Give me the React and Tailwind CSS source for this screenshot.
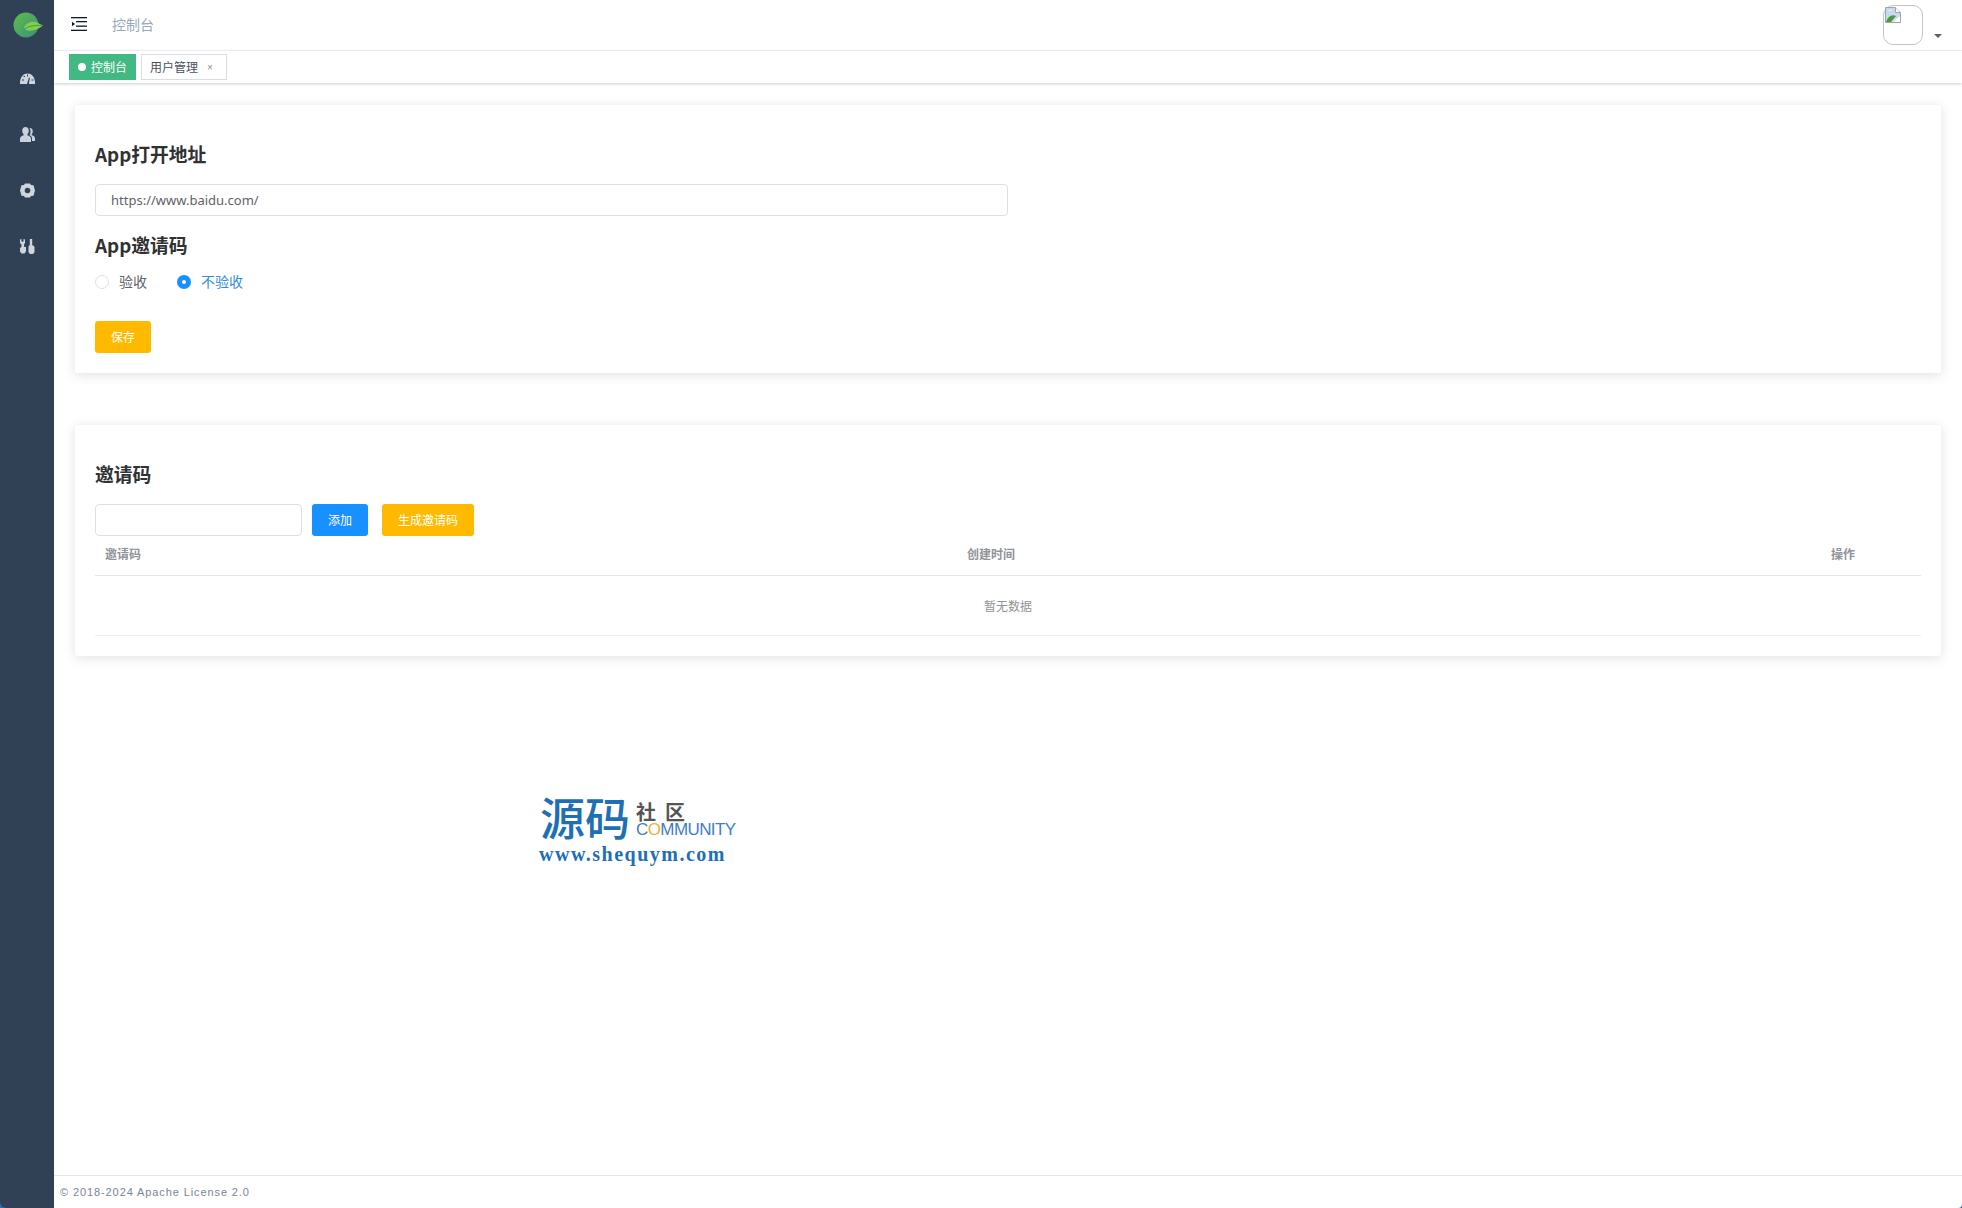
import React from "react";

const SANS = `font-["Noto_Sans_CJK_SC","Noto_Sans",sans-serif]`;

function Leaf() {
  return (
    <svg width="30" height="26" viewBox="0 0 30 26">
      <defs>
        <linearGradient id="ball" x1="0" y1="0" x2="1" y2="1">
          <stop offset="0" stopColor="#5cbf45" />
          <stop offset="1" stopColor="#3c8f80" />
        </linearGradient>
      </defs>
      <circle cx="13" cy="13" r="12.5" fill="url(#ball)" />
      <path d="M11 16c1-4 6-7 12-6l7 3.500c-4 3.500-10 6-15 5-2-.5-3-1-4-2.500z" fill="#84cc4b" />
      <path d="M9 19c5-5 12-6 21-5.500" stroke="#3f9a63" strokeWidth="1" fill="none" />
    </svg>
  );
}

function GaugeIcon() {
  return (
    <svg width="15" height="15" viewBox="0 0 15 15">
      <path d="M0 13c-.5-6 3-10.500 7.500-10.500S15.500 7 15 13z" fill="#cfd5dc" />
      <path d="M7 13l2-6.500 1 .3-1.200 6.200z" fill="#304156" />
      <rect x="7" y="3.500" width="1" height="2" fill="#304156" />
      <rect x="2" y="8.500" width="2" height="1" fill="#304156" />
      <rect x="11.500" y="8.500" width="2" height="1" fill="#304156" />
      <rect x="3.500" y="5" width="1.500" height="1" fill="#304156" />
    </svg>
  );
}

function UsersIcon() {
  return (
    <svg width="15" height="15" viewBox="0 0 15 15" fill="#c9d2dc">
      <path d="M5.500 0c2 0 3.300 1.500 3.300 3.700 0 1.500-.6 2.800-1.400 3.500v1c1.800.6 3.600 1.700 3.600 3.300V15H0v-3.500c0-1.600 1.800-2.700 3.600-3.300v-1c-.8-.7-1.400-2-1.400-3.500C2.200 1.500 3.500 0 5.500 0z" />
      <path d="M10 1c1.700 0 2.800 1.300 2.800 3.200 0 1.300-.5 2.400-1.200 3v.8c1.500.5 3.400 1.500 3.400 3V14h-3v-2.500c0-1.500-1-2.600-2.500-3.400.8-1 1.200-2.600 1-4.300-.1-1-.5-1.900-1-2.500.1 0 .3-.3.500-.3z" />
    </svg>
  );
}

function GearIcon() {
  return (
    <svg width="15" height="15" viewBox="0 0 15 15" fill="#cfd5dc">
      <path
        fillRule="evenodd"
        d="M5 .5h5l1 1.500 2.500.3L15 7.500l-1.500 5.200-2.500.3-1 1.500H5l-1-1.500-2.500-.3L0 7.500l1.500-5.200L4 2zM7.500 4.700a2.800 2.800 0 1 0 0 5.600 2.800 2.800 0 0 0 0-5.600z"
      />
    </svg>
  );
}

function ToolsIcon() {
  return (
    <svg width="15" height="15" viewBox="0 0 15 15" fill="#cfd5dc">
      <path d="M0 .5 1.500 0v2.200l1 .8 1-.8V0L5 .5V4L4 5.500v2.300l2 .2v4.500L4.500 14.500h-3L0 12.500V9l1.500-1.200V5.500L0 4z" />
      <path d="M9.800 0h2.400v6.200c1.300.4 2.300 1 2.300 2v5L13 15h-3l-1.500-1.800v-5c0-1 .4-1.600 1.300-2z" />
    </svg>
  );
}

function MenuIcon() {
  return (
    <svg width="16" height="14" viewBox="0 0 16 14" fill="#111827">
      <rect x="0" y="0" width="16" height="1.300" />
      <rect x="5" y="4" width="11" height="1.300" />
      <rect x="5" y="8.500" width="11" height="1.300" />
      <rect x="0" y="12.700" width="16" height="1.300" />
      <path d="M1 4.800l3 2.200-3 2.200z" />
    </svg>
  );
}

function BrokenImage() {
  return (
    <svg width="16" height="16" viewBox="0 0 16 16">
      <path d="M.5.500h10l5 5v10H.5z" fill="#c9daf0" stroke="#a3a3a3" />
      <path d="M10.500.500v5h5" fill="#fff" stroke="#a3a3a3" />
      <path d="M1 15c2-6 6-8 10-6l-5 6z" fill="#4f9a37" />
      <path d="M3 4c1.500-1 3-1 4 0z" fill="#fff" />
      <path d="M8 15l7-6v6z" fill="#fff" />
    </svg>
  );
}

function Card({ title, children }) {
  return (
    <section className="bg-white rounded-[3px] px-5 pt-[36px] shadow-[0_2px_12px_rgba(60,70,90,0.16)]">
      <h2 className="text-[18.800px] leading-[26px] font-bold text-[#303133]">{title}</h2>
      {children}
    </section>
  );
}

function Field({ value, width }) {
  return (
    <div className={`${width} h-[32px] border border-[#dcdfe6] rounded-[4px] pl-[15px] text-[13px] leading-[30px] text-[#606266] font-["Noto_Sans",sans-serif]`}>
      {value}
    </div>
  );
}

function Logo() {
  return (
    <div className="absolute left-[538px] top-[795px] w-[210px] h-[72px]">
      <div className={`flex items-start h-[44px] ${SANS}`}>
        <span className="ml-[2px] text-[45px] leading-[44px] font-medium text-[#1f6fb5]">源码</span>
        <div className="ml-[6px] mt-[6px] flex flex-col">
          <span className="text-[20px] leading-[21px] font-bold text-[#555555] tracking-[9px]">社区</span>
          <span className="text-[17px] leading-[16px] text-[#3f7fc0] tracking-[-0.600px] font-['Liberation_Sans',sans-serif]">
            C<span className="text-[#e8b23a]">O</span>MMUNITY
          </span>
        </div>
      </div>
      <div className="mt-[4px] ml-[1px] text-[20px] leading-[22px] font-bold text-[#1f6fb5] tracking-[1.500px] font-['Liberation_Serif',serif] whitespace-nowrap">
        www.shequym.com
      </div>
    </div>
  );
}

export default function App() {
  return (
    <div className={`relative flex h-[1208px] w-[1962px] overflow-hidden bg-[#2a6ec0] ${SANS}`}>
      <aside className="w-[54px] shrink-0 bg-[#304156] rounded-bl-[6px] flex flex-col items-center">
        <div className="h-[50px] flex items-center pl-[1px]">
          <Leaf />
        </div>
        <div className="mt-[21px] flex flex-col items-center gap-[41px]">
          <GaugeIcon />
          <UsersIcon />
          <GearIcon />
          <ToolsIcon />
        </div>
      </aside>

      <main className="flex-1 flex flex-col min-w-0 bg-white rounded-br-[4px]">
        <header className="h-[51px] shrink-0 flex items-center border-b border-[#f2f2f2] pl-[17px] pr-[20px]">
          <span className="mb-[2px]">
            <MenuIcon />
          </span>
          <span className="ml-[25px] mb-[2px] text-[14px] text-[#97a8be]">控制台</span>
          <div className="ml-auto self-start mt-[5px] flex items-start">
            <div className="relative w-[40px] h-[40px] rounded-[10px] border border-[#c4c4c4]">
              <div className="absolute left-[1px] top-[1px]">
                <BrokenImage />
              </div>
            </div>
            <span className="ml-[11px] mt-[29px] w-0 h-0 border-x-[4px] border-x-transparent border-t-[4px] border-t-[#5a5e66]" />
          </div>
        </header>

        <nav className="h-[32px] shrink-0 flex items-start gap-[5px] pl-[15px] pt-[3px] shadow-[0_1px_3px_rgba(0,0,0,0.2)]">
          <div className="h-[26px] w-[67px] flex items-center bg-[#42b983] text-white text-[12px] pl-[9px]">
            <span className="w-[8px] h-[8px] rounded-full bg-white mr-[5px]" />
            控制台
          </div>
          <div className="h-[26px] w-[86px] flex items-center bg-white border border-[#d8dce5] text-[#495060] text-[12px] pl-[8px]">
            用户管理
            <span className="ml-[9px] text-[10px] text-[#8a8f99] font-['Liberation_Sans',sans-serif]">×</span>
          </div>
        </nav>

        <div className="flex-1 pl-[21px] pr-[21px] pt-[22px]">
          <Card title="App打开地址">
            <div className="mt-[17px]">
              <Field value="https://www.baidu.com/" width="w-[913px]" />
            </div>
            <h2 className="mt-[16px] text-[18.800px] leading-[26px] font-bold text-[#303133]">App邀请码</h2>
            <div className="mt-[11px] mb-[1px] flex items-center h-[24px] text-[14px]">
              <span className="mt-[1px] w-[14px] h-[14px] rounded-full border border-[#dcdfe6] bg-white" />
              <span className="ml-[10px] text-[#606266]">验收</span>
              <span className="mt-[1px] ml-[30px] w-[14px] h-[14px] rounded-full bg-[#1890ff] flex items-center justify-center">
                <span className="w-[4px] h-[4px] rounded-full bg-white" />
              </span>
              <span className="ml-[10px] text-[#2f8fd8]">不验收</span>
            </div>
            <div className="mt-[28px] pb-[20px]">
              <button className="w-[56px] h-[32px] rounded-[3px] bg-[#ffba00] text-white text-[12px]">保存</button>
            </div>
          </Card>

          <div className="mt-[52px]">
            <Card title="邀请码">
              <div className="mt-[17px] flex items-center">
                <Field value="" width="w-[207px]" />
                <button className="ml-[10px] w-[56px] h-[32px] rounded-[3px] bg-[#1890ff] text-white text-[12px]">添加</button>
                <button className="ml-[14px] w-[92px] h-[32px] rounded-[3px] bg-[#ffba00] text-white text-[12px]">生成邀请码</button>
              </div>
              <div className="grid grid-cols-[862px_864px_100px] h-[40px] border-b border-[#e6e6e6] text-[12px] leading-[36px] font-bold text-[#909399]">
                <span className="pl-[10px]">邀请码</span>
                <span className="pl-[10px]">创建时间</span>
                <span className="pl-[10px]">操作</span>
              </div>
              <div className="h-[60px] border-b border-[#ebeef5] flex items-center justify-center text-[12px] text-[#909399]">
                暂无数据
              </div>
              <div className="h-[20px]" />
            </Card>
          </div>
        </div>

        <footer className="h-[33px] shrink-0 border-t border-[#e7e7e7] pl-[6px] text-[11px] leading-[33px] tracking-[0.900px] text-[#7b8494] font-['Liberation_Sans',sans-serif]">
          © 2018-2024 Apache License 2.0
        </footer>
      </main>

      <Logo />
    </div>
  );
}
